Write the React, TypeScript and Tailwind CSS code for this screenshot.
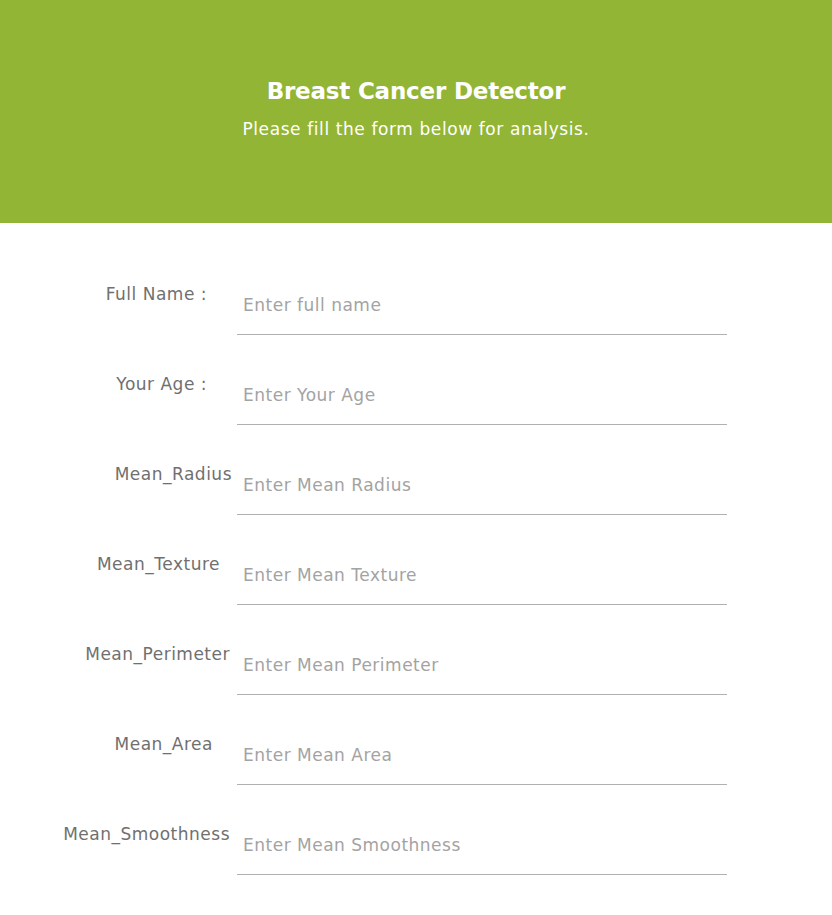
const fields = [
  { label: 'Full Name :', placeholder: 'Enter full name', pr: 'pr-[30px]' },
  { label: 'Your Age :', placeholder: 'Enter Your Age', pr: 'pr-[30px]' },
  { label: 'Mean_Radius', placeholder: 'Enter Mean Radius', pr: 'pr-[5px]' },
  { label: 'Mean_Texture', placeholder: 'Enter Mean Texture', pr: 'pr-[17px]' },
  { label: 'Mean_Perimeter', placeholder: 'Enter Mean Perimeter', pr: 'pr-[7px]' },
  { label: 'Mean_Area', placeholder: 'Enter Mean Area', pr: 'pr-[24px]' },
  { label: 'Mean_Smoothness', placeholder: 'Enter Mean Smoothness', pr: 'pr-[7px]' },
]

export default function App() {
  return (
    <div className="min-h-screen bg-white font-['DejaVu_Sans',sans-serif]">
      {/* Header */}
      <div className="h-[223px] bg-[#93b535] flex flex-col items-center pt-[75px]">
        <h1 className="text-[23px] font-bold text-white leading-[32px] tracking-[-0.2px]">
          Breast Cancer Detector
        </h1>
        <p className="text-[17px] text-white leading-[24px] mt-[10px] tracking-[0.6px]">
          Please fill the form below for analysis.
        </p>
      </div>

      {/* Form */}
      <form className="pt-[58px]">
        {fields.map(f => (
          <div key={f.label} className="flex h-[90px]">
            <label className={`w-[237px] shrink-0 text-right text-[17px] text-[#707070] leading-[24px] pt-[1px] tracking-[0.5px] ${f.pr}`}>
              {f.label}
            </label>
            <div className="w-[490px] h-[54px] border-b border-[#b0b0b0] flex items-start pt-[12px]">
              <input
                type="text"
                placeholder={f.placeholder}
                className="w-full px-[6px] text-[17px] leading-[24px] tracking-[0.5px] text-[#555] placeholder:text-[#a3a3a3] outline-none bg-transparent"
              />
            </div>
          </div>
        ))}
      </form>
    </div>
  )
}
